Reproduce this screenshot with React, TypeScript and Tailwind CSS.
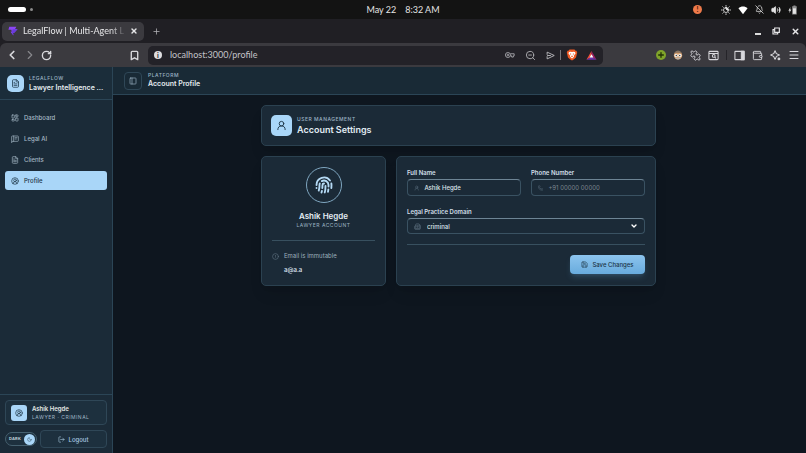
import React, { useState } from 'react';
import {
  BellOff,
  Bookmark,
  Building2,
  ChevronDown,
  ChevronLeft,
  ChevronRight,
  CircleAlert,
  CircleUserRound,
  FileText,
  Fingerprint,
  LayoutDashboard,
  LogOut,
  Menu,
  Moon,
  PanelLeft,
  Phone,
  Plus,
  Puzzle,
  RotateCw,
  Save,
  UserRound,
  Volume2,
  Wallet,
  X,
  ZoomOut,
} from 'lucide-react';

interface IconProps {
  className?: string;
}

const ChatPanelIcon = ({ className }: IconProps) => (
  <svg viewBox="0 0 24 24" className={className} fill="none" stroke="currentColor" strokeWidth="2" strokeLinecap="round" strokeLinejoin="round">
    <path d="M2 22V5a2 2 0 0 1 2-2h16a2 2 0 0 1 2 2v12a2 2 0 0 1-2 2H5z" />
    <path d="M8 3v16M12 8h6M12 12h4" />
  </svg>
);

const BoltLogo = ({ className }: IconProps) => (
  <svg viewBox="0 0 24 24" className={className}>
    <path d="M3 2h17l-3 5h6l-8 9h-3l1 7-7-9h3l-1-5H1z" fill="#8b45f5" />
    <path d="M12 8h11l-8 8h-3l1 7-4-6 2-9z" fill="#6a3be0" />
  </svg>
);

const BraveLogo = ({ className }: IconProps) => (
  <svg viewBox="0 0 24 24" className={className}>
    <path d="M7 1h10l2 2.5 2-.2 1.5 4-.7 2L20 17l-4 3.7L12 23l-4-2.3L4 17 2.2 9.3l-.7-2 1.5-4 2 .2z" fill="#ee5a24" />
    <path d="M6 6l3-.6 3 .8 3-.8 3 .6 1 3-3.5 4.5.5 2-4 3.5-4-3.5.5-2L5 9z" fill="#fff" />
    <path d="M7.5 8.5l3 .8-.6 3zM16.5 8.5l-3 .8.6 3zM12 12.5l2 2.5-2 1.5-2-1.5z" fill="#ee5a24" />
  </svg>
);

const BatLogo = ({ className }: IconProps) => (
  <svg viewBox="0 0 24 24" className={className}>
    <path d="M12 2L1 21l11-6z" fill="#f0503a" />
    <path d="M12 2l11 19-11-6z" fill="#9e2064" />
    <path d="M1 21h22l-11-7z" fill="#6a35a8" />
    <path d="M12 9.5l4 7H8z" fill="#fff" />
  </svg>
);

const AvatarLogo = ({ className }: IconProps) => (
  <svg viewBox="0 0 24 24" className={className}>
    <circle cx="12" cy="13" r="10" fill="#d9a06c" />
    <path d="M3 9c1-6 6-8 9-8s8 2 9 8c-5-3-13-3-18 0z" fill="#8b7461" />
    <path d="M5 17c3 2 11 2 14 0-1 4-4 6-7 6s-6-2-7-6z" fill="#b9b2aa" />
    <circle cx="7.5" cy="13" r="4" fill="#f4f4f4" />
    <circle cx="16.5" cy="13" r="4" fill="#f4f4f4" />
    <circle cx="8" cy="13" r="1.8" fill="#444" />
    <circle cx="16" cy="13" r="1.8" fill="#444" />
  </svg>
);

const SearchWindowIcon = ({ className }: IconProps) => (
  <svg viewBox="0 0 24 24" className={className} fill="none" stroke="currentColor" strokeWidth="2.2">
    <rect x="2" y="3" width="20" height="18" rx="2" />
    <path d="M2 7.5h20M14.5 15.5l3 3" />
    <circle cx="12.500" cy="13" r="3" />
  </svg>
);

const SidePanelIcon = ({ className }: IconProps) => (
  <svg viewBox="0 0 24 24" className={className} fill="none" stroke="currentColor" strokeWidth="2.2">
    <rect x="2" y="3" width="20" height="18" rx="1" />
    <path d="M16 3h6v18h-6z" fill="currentColor" />
  </svg>
);

const WifiWedgeIcon = ({ className }: IconProps) => (
  <svg viewBox="0 0 24 24" className={className}>
    <path d="M1 8c6-6 16-6 22 0L12 22z" fill="currentColor" />
  </svg>
);

const RestoreIcon = ({ className }: IconProps) => (
  <svg viewBox="0 0 24 24" className={className} fill="none" stroke="currentColor" strokeWidth="3.5">
    <path d="M8 3h14v13H8z" />
    <path d="M8 8H3v13h14v-5" />
  </svg>
);

const BrightnessIcon = ({ className }: IconProps) => (
  <svg viewBox="0 0 24 24" className={className} fill="none" stroke="currentColor" strokeWidth="2" strokeLinecap="round">
    <path d="M12 1v2M12 21v2M1 12h2M21 12h2M4.2 4.2l1.500 1.500M18.300 18.300l1.500 1.500M4.200 19.800l1.500-1.500M18.300 5.700l1.500-1.500" />
    <path d="M12 6a6 6 0 1 0 6 6c-4 1-7-2-6-6z" />
    <path d="M12 6a6 6 0 0 1 6 6c-4 1-7-2-6-6z" fill="currentColor" />
  </svg>
);

const BatteryIcon = ({ className }: IconProps) => (
  <svg viewBox="0 0 24 24" className={className}>
    <path d="M13 3V1h5v2h3v20H10V3z" fill="#8e8e8e" />
    <path d="M12 8h7v13h-7z" fill="currentColor" />
    <path d="M6 5L1 14h3l-1 6 5-9H5z" fill="currentColor" />
  </svg>
);

const PasswordKeyIcon = ({ className }: IconProps) => (
  <svg viewBox="0 0 24 24" className={className} fill="none" stroke="currentColor" strokeWidth="2">
    <circle cx="7" cy="12" r="6" />
    <circle cx="7" cy="12" r="2" />
    <path d="M13 9h9v5h-2v3h-4v-3h-3" />
  </svg>
);

const SendIcon = ({ className }: IconProps) => (
  <svg viewBox="0 0 24 24" className={className} fill="none" stroke="currentColor" strokeWidth="2.5" strokeLinejoin="round">
    <path d="M3 3l19 9-19 9v-7M3 3v7M3 12h10" />
  </svg>
);

const AssistantIcon = ({ className }: IconProps) => (
  <svg viewBox="0 0 24 24" className={className} fill="none" stroke="currentColor" strokeWidth="2.200" strokeLinejoin="round">
    <path d="M11 1.500l3 6.500 6.500 3-6.500 3-3 6.500L8 14l-6.500-3L8 8z" />
    <circle cx="19.500" cy="19.500" r="2" fill="currentColor" />
  </svg>
);

const navItems = [
  { label: 'Dashboard', icon: LayoutDashboard },
  { label: 'Legal AI', icon: ChatPanelIcon },
  { label: 'Clients', icon: FileText },
  { label: 'Profile', icon: CircleUserRound, active: true },
];

const SystemBar: React.FC = () => (
  <div className="flex h-[19px] items-center bg-[#131313] px-2 text-[#e4e4e4]">
    <div className="flex flex-1 items-center gap-1">
      <span className="h-[5px] w-[18px] rounded-full bg-white" />
      <span className="size-[3px] rounded-full bg-[#8c8c8c]" />
    </div>
    <div className="flex gap-[9px] text-[9px]">
      <span>May 22</span>
      <span>8:32 AM</span>
    </div>
    <div className="flex flex-1 items-center justify-end gap-[7px]">
      <span className="mr-3 flex size-[9px] items-center justify-center rounded-full bg-[#ee7a4a] text-[7px] font-bold text-[#3a1508]">!</span>
      <BrightnessIcon className="size-[10px]" />
      <WifiWedgeIcon className="size-[10px] text-white" />
      <BellOff className="size-[9px]" />
      <Volume2 className="size-[10px]" fill="currentColor" />
      <BatteryIcon className="size-[10px]" />
    </div>
  </div>
);

const TabStrip: React.FC = () => (
  <div className="flex h-6 items-center bg-[#201f24] pr-[6px] pl-[2px] text-[#e6e6e8]">
    <div className="flex h-[19px] w-[142px] items-center rounded-[5px] bg-[#3b3a3f] px-[6px]">
      <BoltLogo className="size-[10px] shrink-0" />
      <span className="ml-[5px] w-[103px] mask-r-from-85% text-[9px] whitespace-nowrap">LegalFlow | Multi-Agent L</span>
      <button aria-label="Close tab" className="ml-auto">
        <X className="size-[8px]" strokeWidth={4} />
      </button>
    </div>
    <button aria-label="New tab" className="ml-2">
      <Plus className="size-[9px] text-[#b4b4b8]" />
    </button>
    <div className="ml-auto flex items-center gap-[11px]">
      <button aria-label="Minimize" className="flex h-[7px] w-[6px] items-end">
        <span className="h-[2px] w-full bg-[#dcdcdc]" />
      </button>
      <button aria-label="Restore">
        <RestoreIcon className="size-[8px]" />
      </button>
      <button aria-label="Close window">
        <X className="size-[9px]" strokeWidth={4} />
      </button>
    </div>
  </div>
);

const Toolbar: React.FC = () => (
  <div className="flex h-6 items-center rounded-t-md bg-[#3b3a3f] pr-[6px] pl-[5px] text-[#d8d8dc]">
    <div className="flex items-center gap-1">
      <button aria-label="Back">
        <ChevronLeft className="size-[14px]" strokeWidth={3} />
      </button>
      <button aria-label="Forward" className="text-[#88888c]">
        <ChevronRight className="size-[14px]" />
      </button>
      <button aria-label="Reload">
        <RotateCw className="size-[11px]" strokeWidth={3} />
      </button>
    </div>
    <button aria-label="Bookmark" className="ml-[77px]">
      <Bookmark className="size-[11px]" strokeWidth={3} />
    </button>
    <div className="ml-2 flex h-[19px] max-w-[455px] flex-1 items-center rounded-[5px] bg-[#232228] px-[6px]">
      <span className="flex size-[8px] items-center justify-center rounded-full bg-[#dddde0] text-[7px] font-bold text-[#232228]">i</span>
      <input
        aria-label="Address"
        defaultValue="localhost:3000/profile"
        className="ml-2 min-w-0 flex-1 bg-transparent text-[9px] text-[#c4c4c8] outline-none"
      />
      <div className="flex items-center">
        <PasswordKeyIcon className="size-[10px] text-[#b0b0b4]" />
        <ZoomOut className="ml-[10px] size-[11px] text-[#b0b0b4]" />
        <SendIcon className="ml-[10px] size-[9px] text-[#b8b8bc]" />
        <span className="ml-[5px] h-[10px] w-px bg-[#77777b]" />
        <BraveLogo className="ml-[5px] size-[12px]" />
        <BatLogo className="ml-[8px] size-[11px]" />
      </div>
    </div>
    <div className="ml-auto flex items-center gap-[7px]">
      <span className="flex size-[10px] items-center justify-center rounded-full bg-[#7fa32a] text-[#223005]">
        <Plus className="size-[8px]" strokeWidth={4} />
      </span>
      <AvatarLogo className="size-[10px]" />
      <Puzzle className="size-[11px] -scale-x-100" />
      <SearchWindowIcon className="size-[11px]" />
      <span className="h-[10px] w-px bg-[#252429]" />
      <SidePanelIcon className="size-[11px]" />
      <Wallet className="size-[11px]" />
      <AssistantIcon className="size-[11px]" />
      <Menu className="size-[12px]" />
    </div>
  </div>
);

const Sidebar: React.FC = () => {
  const [dark, setDark] = useState(true);

  return (
    <aside className="flex w-[113px] shrink-0 flex-col border-r border-[#2b4556] bg-[#1b2b38]">
      <div className="flex h-[33px] items-center gap-[5px] border-b border-[#2b4556] bg-[#1b2d3a] px-[7px]">
        <span className="flex size-[17px] shrink-0 items-center justify-center rounded-[5px] bg-[#a9d6f8] text-[#1b3344]">
          <FileText className="size-[9px]" />
        </span>
        <div>
          <p className="text-[5px] leading-[8px] font-medium tracking-widest text-[#9db4c4]">LEGALFLOW</p>
          <p className="text-[7px] leading-[11px] font-semibold whitespace-nowrap text-[#e4ebef]">Lawyer Intelligence ...</p>
        </div>
      </div>

      <nav className="flex flex-1 flex-col gap-[2px] px-[5px] pt-2">
        {navItems.map(({ label, icon: Icon, active }) => (
          <a
            key={label}
            href="#"
            className={`flex h-[19px] items-center gap-[5px] rounded-[3px] px-[6px] text-[6px] font-medium ${
              active ? 'bg-[#a9d6f8] text-[#1b3344]' : 'text-[#a5b8c5]'
            }`}
          >
            <Icon className="size-[8px]" />
            {label}
          </a>
        ))}
      </nav>

      <div className="flex flex-col gap-[5px] border-t border-[#2b4556] p-[5px]">
        <div className="flex h-[25px] items-center gap-[5px] rounded-[4px] border border-[#2f4757] bg-[#1d303e] px-[5px]">
          <span className="flex size-4 items-center justify-center rounded-[3px] bg-[#a9d6f8] text-[#1b3344]">
            <CircleUserRound className="size-[8px]" />
          </span>
          <div>
            <p className="text-[6px] leading-[8px] font-semibold text-[#e4e8e4]">Ashik Hegde</p>
            <p className="text-[5px] leading-[8px] tracking-widest text-[#9db4c4]">LAWYER · CRIMINAL</p>
          </div>
        </div>
        <div className="flex items-center gap-[3px]">
          <button
            role="switch"
            aria-checked={dark}
            onClick={() => setDark(!dark)}
            className="flex h-[14px] w-8 shrink-0 items-center justify-between rounded-full border border-[#45606f] bg-[#1d303e] pr-px pl-[3px] text-[4px] font-bold tracking-wider text-[#c2d2dc]"
          >
            DARK
            <span className="flex size-[11px] items-center justify-center rounded-full bg-[#a9d6f8] text-[#1b3344]">
              <Moon className="size-[5px]" />
            </span>
          </button>
          <button className="flex h-[18px] flex-1 items-center justify-center gap-[3px] rounded-[4px] border border-[#2f4757] bg-[#1d303e] text-[6px] font-medium text-[#a9cbe2]">
            <LogOut className="size-[7px]" />
            Logout
          </button>
        </div>
      </div>
    </aside>
  );
};

const fieldClass =
  'flex items-center rounded-[4px] border border-[#3a5262] border-t-[#6d8494] bg-[#1b2a37] px-[6px] text-[#627585]';

const ProfilePage: React.FC = () => {
  const [name, setName] = useState('Ashik Hegde');
  const [phone, setPhone] = useState('');

  return (
    <div className="mx-auto flex max-w-[395px] flex-col gap-[10px]">
      <section className="flex h-[41px] items-center gap-[5px] rounded-[5px] border border-[#2b4150] bg-[#1b2a37] px-[9px] shadow-lg">
        <span className="flex size-[21px] items-center justify-center rounded-[5px] bg-[#a9d6f8] text-[#1b3344]">
          <UserRound className="size-[11px]" />
        </span>
        <div>
          <p className="text-[5px] leading-[7px] font-medium tracking-widest text-[#9db4c4]">USER MANAGEMENT</p>
          <h1 className="text-[9px] leading-[13px] font-semibold text-[#e0ebf3]">Account Settings</h1>
        </div>
      </section>

      <div className="flex items-stretch gap-[10px]">
        <section className="flex w-[125px] shrink-0 flex-col items-center rounded-[5px] border border-[#2b4150] bg-[#1b2a37] p-[10px] shadow-lg">
          <span className="flex size-9 items-center justify-center rounded-full border border-[#7fa6c0] text-[#b5daf5]">
            <Fingerprint className="size-[18px]" strokeWidth={2.5} />
          </span>
          <h2 className="mt-2 text-[8px] leading-[10px] font-semibold text-[#e4edf4]">Ashik Hegde</h2>
          <p className="text-[5px] leading-[9px] tracking-widest text-[#9db4c4]">LAWYER ACCOUNT</p>
          <div className="mt-[10px] w-full border-t border-[#38505f] pt-[10px]">
            <p className="flex items-center gap-[5px] text-[6px] leading-[10px] text-[#9db0bd]">
              <CircleAlert className="size-[7px] text-[#627585]" />
              Email is immutable
            </p>
            <p className="mt-1 pl-3 text-[6px] leading-[10px] font-semibold text-[#d2dfe8]">a@a.a</p>
          </div>
        </section>

        <form
          onSubmit={(e) => e.preventDefault()}
          className="flex min-w-0 flex-1 flex-col rounded-[5px] border border-[#2b4150] bg-[#1b2a37] p-[10px] shadow-lg"
        >
          <div className="grid grid-cols-2 gap-[10px]">
            <div>
              <label htmlFor="name" className="block text-[6px] leading-[12px] font-semibold text-[#d2dfe8]">Full Name</label>
              <div className={`${fieldClass} h-[17px]`}>
                <UserRound className="size-[6px]" />
                <input
                  id="name"
                  value={name}
                  onChange={(e) => setName(e.target.value)}
                  className="ml-[5px] w-full min-w-0 bg-transparent text-[6px] font-medium text-[#dbe5ec] outline-none"
                />
              </div>
            </div>
            <div>
              <label htmlFor="phone" className="block text-[6px] leading-[12px] font-semibold text-[#d2dfe8]">Phone Number</label>
              <div className={`${fieldClass} h-[17px]`}>
                <Phone className="size-[6px]" />
                <input
                  id="phone"
                  value={phone}
                  onChange={(e) => setPhone(e.target.value)}
                  placeholder="+91 00000 00000"
                  className="ml-[5px] w-full min-w-0 bg-transparent text-[6px] outline-none placeholder:text-[#7c8790]"
                />
              </div>
            </div>
          </div>

          <label htmlFor="domain" className="mt-[10px] block text-[6px] leading-[12px] font-semibold text-[#d2dfe8]">Legal Practice Domain</label>
          <div className={`${fieldClass} h-4`}>
            <Building2 className="size-[7px]" />
            <select id="domain" className="ml-[6px] flex-1 appearance-none bg-transparent text-[6px] font-medium text-[#dbe5ec] outline-none">
              <option>criminal</option>
            </select>
            <ChevronDown className="size-[8px] text-white" strokeWidth={4} />
          </div>

          <div className="mt-[10px] flex justify-end border-t border-[#38505f] pt-[10px]">
            <button
              type="submit"
              className="flex h-[19px] w-[75px] items-center justify-center gap-1 rounded-[4px] bg-linear-to-b from-[#8cc4ee] to-[#68abdd] text-[6px] font-medium text-[#1b3344] shadow-md shadow-[#68abdd]/20"
            >
              <Save className="size-[7px]" />
              Save Changes
            </button>
          </div>
        </form>
      </div>
    </div>
  );
};

export default function App() {
  return (
    <div className="flex min-h-screen flex-col bg-[#0e161f]">
      <header className="bg-[#201f24] font-['Lato',sans-serif]">
        <SystemBar />
        <TabStrip />
        <Toolbar />
      </header>
      <div className="flex flex-1 font-['Inter',sans-serif]">
        <Sidebar />
        <div className="flex min-w-0 flex-1 flex-col">
          <header className="flex h-7 items-center gap-[6px] border-b border-[#2b4556] bg-[#192a36] px-[11px]">
            <button aria-label="Toggle sidebar" className="flex size-[18px] items-center justify-center rounded-[4px] border border-[#2f4757] text-[#9db4c4]">
              <PanelLeft className="size-[8px]" />
            </button>
            <div>
              <p className="text-[5px] leading-[7px] font-medium tracking-widest text-[#9db4c4]">PLATFORM</p>
              <p className="text-[7px] leading-[10px] font-semibold text-[#e4ebef]">Account Profile</p>
            </div>
          </header>
          <main className="flex-1 py-[10px] pr-3 pl-[10px]">
            <ProfilePage />
          </main>
        </div>
      </div>
    </div>
  );
}
